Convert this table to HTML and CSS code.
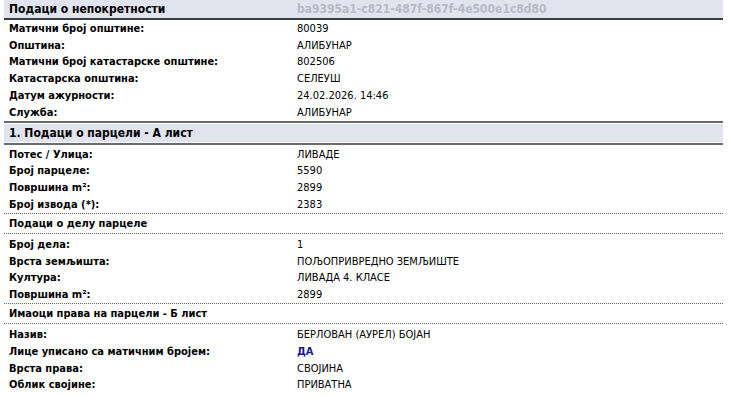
FILE: index.html
```html
<!DOCTYPE html>
<html>
<head>
<meta charset="utf-8">
<link rel="stylesheet" href="styles.css">
</head>
<body>
<div class="wrap">
  <div class="head">
    <div class="lbl">Подаци о непокретности</div>
    <div class="guid">ba9395a1-c821-487f-867f-4e500e1c8d80</div>
  </div>
  <div class="rows first">
    <div class="row"><div class="lbl">Матични број општине:</div><div class="val">80039</div></div>
    <div class="row"><div class="lbl">Општина:</div><div class="val">АЛИБУНАР</div></div>
    <div class="row"><div class="lbl">Матични број катастарске општине:</div><div class="val">802506</div></div>
    <div class="row"><div class="lbl">Катастарска општина:</div><div class="val">СЕЛЕУШ</div></div>
    <div class="row"><div class="lbl">Датум ажурности:</div><div class="val">24.02.2026. 14:46</div></div>
    <div class="row"><div class="lbl">Служба:</div><div class="val">АЛИБУНАР</div></div>
  </div>
  <div class="section"><div class="lbl">1. Подаци о парцели - А лист</div></div>
  <div class="rows">
    <div class="row"><div class="lbl">Потес / Улица:</div><div class="val">ЛИВАДЕ</div></div>
    <div class="row"><div class="lbl">Број парцеле:</div><div class="val">5590</div></div>
    <div class="row"><div class="lbl">Површина m²:</div><div class="val">2899</div></div>
    <div class="row"><div class="lbl">Број извода (*):</div><div class="val">2383</div></div>
  </div>
  <div class="sub"><div class="lbl">Подаци о делу парцеле</div></div>
  <div class="rows after-sub">
    <div class="row"><div class="lbl">Број дела:</div><div class="val">1</div></div>
    <div class="row"><div class="lbl">Врста земљишта:</div><div class="val">ПОЉОПРИВРЕДНО ЗЕМЉИШТЕ</div></div>
    <div class="row"><div class="lbl">Култура:</div><div class="val">ЛИВАДА 4. КЛАСЕ</div></div>
    <div class="row"><div class="lbl">Површина m²:</div><div class="val">2899</div></div>
  </div>
  <div class="sub"><div class="lbl">Имаоци права на парцели - Б лист</div></div>
  <div class="rows after-sub">
    <div class="row"><div class="lbl">Назив:</div><div class="val">БЕРЛОВАН (АУРЕЛ) БОЈАН</div></div>
    <div class="row"><div class="lbl">Лице уписано са матичним бројем:</div><div class="val yes">ДА</div></div>
    <div class="row"><div class="lbl">Врста права:</div><div class="val">СВОЈИНА</div></div>
    <div class="row"><div class="lbl">Облик својине:</div><div class="val">ПРИВАТНА</div></div>
  </div>
</div>
</body>
</html>
```

FILE: styles.css
```css
html, body {
  margin: 0;
  padding: 0;
  background: #fff;
}
body {
  font-family: "DejaVu Sans Condensed", "DejaVu Sans", Verdana, sans-serif;
  font-size: 11px;
  color: #000;
}
.wrap {
  width: 719px;
  margin-left: 4px;
  overflow: hidden;
}
.head {
  display: flex;
  height: 18px;
  align-items: center;
  background: #e1e3ef;
  border-bottom: 2px solid #3a3d44;
}
.head .lbl {
  width: 293px;
  padding-left: 5px;
  box-sizing: border-box;
  font-weight: bold;
  font-size: 12px;
}
.guid {
  color: #b7bac7;
  font-weight: bold;
  font-size: 12px;
  white-space: nowrap;
}
.rows {
  padding: 1px 0 0;
}
.rows.first {
  padding-top: 0;
}
.rows.after-sub {
  padding-top: 2px;
}
.row {
  display: flex;
  height: 16.8px;
  align-items: center;
}
.row .lbl {
  width: 293px;
  padding-left: 5px;
  box-sizing: border-box;
  font-weight: bold;
  white-space: nowrap;
}
.val {
  white-space: nowrap;
}
.val.yes {
  color: #1a1a8c;
  font-weight: bold;
}
.section {
  border-top: 2px solid #6b6b6b;
  border-bottom: 2px solid #6b6b6b;
  padding: 1px 0;
}
.section .lbl {
  background: #e1e3ef;
  height: 18px;
  line-height: 18px;
  padding-left: 5px;
  font-weight: bold;
  font-size: 12px;
}
.sub {
  border-top: 1px dotted #666;
  border-bottom: 1px dotted #666;
  height: 19px;
  display: flex;
  align-items: center;
}
.sub .lbl {
  padding-left: 5px;
  font-weight: bold;
}
```
